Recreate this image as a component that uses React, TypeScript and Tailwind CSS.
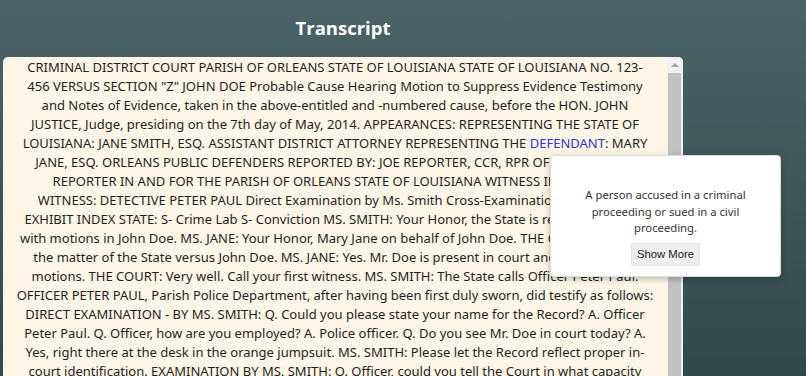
import React from 'react';

const before = [
  'CRIMINAL DISTRICT COURT PARISH OF ORLEANS STATE OF LOUISIANA STATE OF LOUISIANA NO. 123-',
  '456 VERSUS SECTION "Z" JOHN DOE Probable Cause Hearing Motion to Suppress Evidence Testimony',
  'and Notes of Evidence, taken in the above-entitled and -numbered cause, before the HON. JOHN',
  'JUSTICE, Judge, presiding on the 7th day of May, 2014. APPEARANCES: REPRESENTING THE STATE OF',
];

const after = [
  'JANE, ESQ. ORLEANS PUBLIC DEFENDERS REPORTED BY: JOE REPORTER, CCR, RPR OFFICIAL COURT',
  'REPORTER IN AND FOR THE PARISH OF ORLEANS STATE OF LOUISIANA WITNESS INDEX PAGE',
  'WITNESS: DETECTIVE PETER PAUL Direct Examination by Ms. Smith Cross-Examination by Ms. Jane',
  'EXHIBIT INDEX STATE: S- Crime Lab S- Conviction MS. SMITH: Your Honor, the State is ready to proceed',
  'with motions in John Doe. MS. JANE: Your Honor, Mary Jane on behalf of John Doe. THE COURT: This is in',
  'the matter of the State versus John Doe. MS. JANE: Yes. Mr. Doe is present in court and ready on the',
  'motions. THE COURT: Very well. Call your first witness. MS. SMITH: The State calls Officer Peter Paul.',
  'OFFICER PETER PAUL, Parish Police Department, after having been first duly sworn, did testify as follows:',
  'DIRECT EXAMINATION - BY MS. SMITH: Q. Could you please state your name for the Record? A. Officer',
  'Peter Paul. Q. Officer, how are you employed? A. Police officer. Q. Do you see Mr. Doe in court today? A.',
  'Yes, right there at the desk in the orange jumpsuit. MS. SMITH: Please let the Record reflect proper in-',
  'court identification. EXAMINATION BY MS. SMITH: Q. Officer, could you tell the Court in what capacity',
  'you were working on the night of March 2nd? A. I was on patrol in the Seventh District. Q. And did you',
  'have occasion to come into contact with the defendant that night? A. Yes, I did. Q. Can you tell the',
  'Court how that came about? A. I observed a vehicle run a red light at the corner of Elysian Fields and',
  'Gentilly Boulevard. Q. What did you do next? A. I activated my lights and conducted a traffic stop.',
  'Q. Who was driving the vehicle? A. Mr. Doe. Q. What happened after you approached the vehicle? A. I',
  'asked for his license and registration and noticed a strong odor coming from inside the car. Q. What',
  'did you do then? A. I asked him to step out of the vehicle. MS. JANE: Objection, Your Honor. THE',
  'COURT: Overruled. You may continue. MS. SMITH: Thank you, Your Honor. Q. Officer, please continue.',
];

function Line({ text, last }: { text: string; last?: boolean }) {
  return (
    <>
      {text}
      {!last && <br />}
    </>
  );
}

export default function App() {
  return (
    <div
      className="relative h-screen overflow-hidden bg-gradient-to-b from-[#4b6467] to-[#33484a]"
      style={{ fontFamily: '"Noto Sans", "Open Sans", sans-serif' }}
    >
      <div className="ml-[3px] w-[680px]">
        <h2 className="flex h-[57px] items-center justify-center pb-px text-[18.5px] font-bold text-white [font-family:'Open_Sans',sans-serif]">
          Transcript
        </h2>
        <div className="flex h-[520px] overflow-hidden rounded-[5px] bg-[#fdf6e6]">
          <div className="flex-1 overflow-hidden px-2 pt-px text-center text-[13px] leading-[19px] text-[#1f1f1f]">
            <p className="whitespace-nowrap">
              {before.map((t, i) => (
                <Line key={'b' + i} text={t} />
              ))}
              LOUISIANA: JANE SMITH, ESQ. ASSISTANT DISTRICT ATTORNEY REPRESENTING THE{' '}
              <span className="cursor-pointer text-[#3131d6]">DEFENDANT</span>: MARY
              <br />
              {after.map((t, i) => (
                <Line key={'a' + i} text={t} last={i === after.length - 1} />
              ))}
            </p>
          </div>
          {/* scrollbar */}
          <div className="flex w-[16px] flex-col bg-[#f1f1f1]">
            <div className="flex h-[16px] items-center justify-center">
              <div className="h-0 w-0 border-x-[4px] border-b-[4px] border-x-transparent border-b-[#a3a3a3]" />
            </div>
            <div className="mb-[60px] ml-[1px] mr-[2px] flex-1 bg-[#c1c1c1]" />
          </div>
        </div>
      </div>

      <div className="absolute left-[550px] top-[155px] flex w-[231px] flex-col items-center rounded-[4px] border border-[#dcdcdc] bg-white px-4 pb-[10px] pt-[31px] shadow-[0_2px_6px_rgba(0,0,0,0.25)]">
        <p className="text-center text-[11.25px] leading-[16.5px] text-[#333]">
          A person accused in a criminal proceeding or sued in a civil proceeding.
        </p>
        <button className="mt-[6px] h-[23px] rounded-[2px] border border-[#e3e3e3] bg-[#efefef] px-[5px] text-[11.3px] text-[#222] [font-family:'Liberation_Sans',Arial,sans-serif]">
          Show More
        </button>
      </div>
    </div>
  );
}
